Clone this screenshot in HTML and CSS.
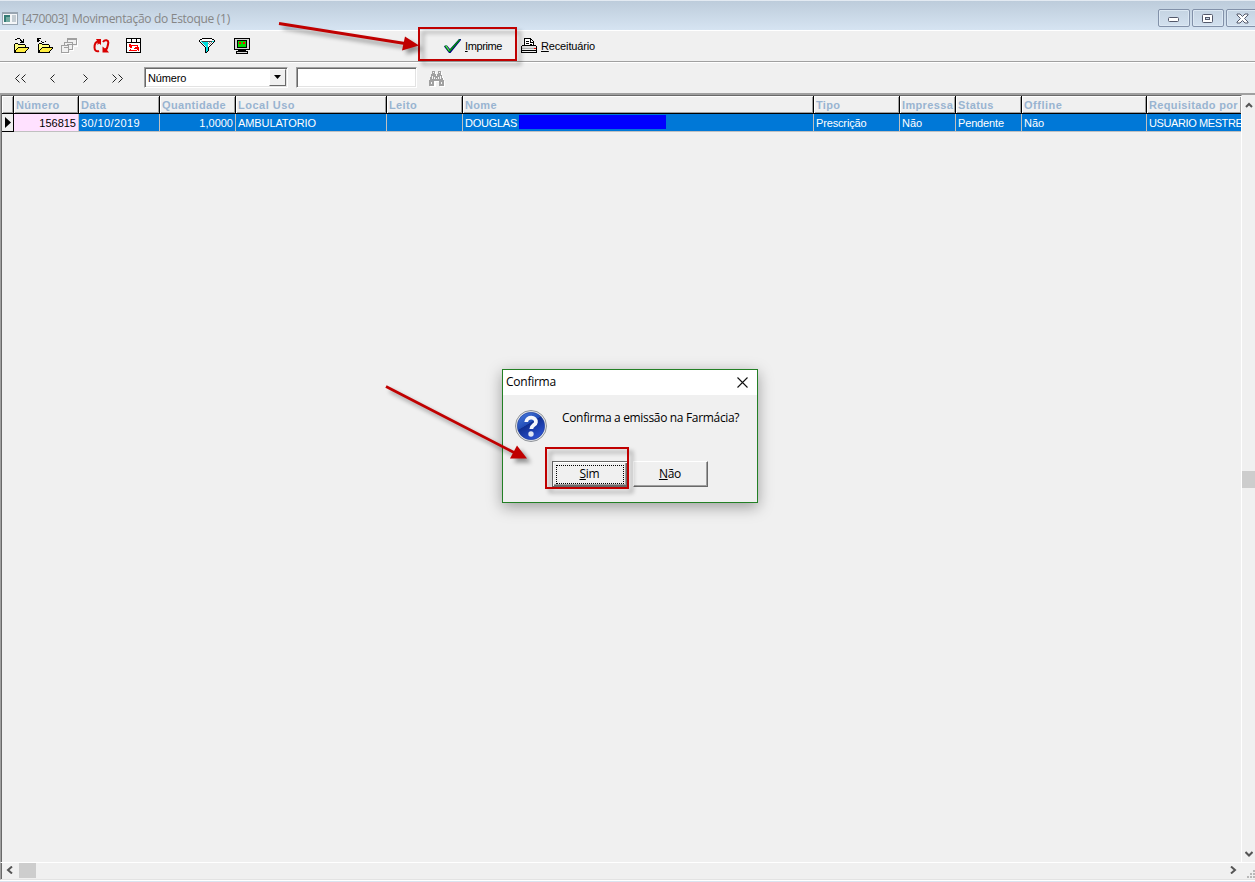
FILE: index.html
```
<!DOCTYPE html>
<html lang="pt-BR">
<head>
  <meta charset="UTF-8">
  <title>[470003] Movimentação do Estoque (1)</title>
  <link rel="stylesheet" href="styles.css">
</head>
<body>
<div class="window">
  <div class="titlebar">
    <svg class="app-icon" width="16" height="14" viewBox="0 0 16 14" shape-rendering="crispEdges">
      <path fill="#98a5b1" d="M0 0h16v13H0z"/><path fill="#f4f6f8" d="M1 2h14v10H1z"/>
      <path fill="#347b75" d="M2 3h6v7H2z"/><path fill="#74aaa1" d="M4 5h4v5H4z"/><path fill="#c3ccd2" d="M10 3h4v7h-4z"/>
    </svg>
    <span class="code">[470003]</span>
    <span class="caption">Movimentação do Estoque (1)</span>
    <div class="win-buttons">
      <div class="win-button"><svg class="min" width="12" height="6"><rect x=".5" y=".5" width="10" height="4" rx="1" fill="#fff" stroke="#53586a"/></svg></div>
      <div class="win-button"><svg width="12" height="9"><rect x=".5" y=".5" width="10" height="8" rx="1" fill="#fff" stroke="#53586a"/><rect x="3.5" y="3.5" width="4" height="2" fill="#c8d6e4" stroke="#53586a"/></svg></div>
      <div class="win-button"><svg width="13" height="11"><path d="M1 1h3l2.500 2.500L9 1h3v1L8.500 5.500 12 9v1H9L6.500 7.500 4 10H1V9l3.500-3.500L1 2z" fill="#fff" stroke="#53586a"/></svg></div>
    </div>
  </div>

  <div class="toolbar">
    <svg class="icon open" width="16" height="16" viewBox="0 0 16 16" shape-rendering="crispEdges">
      <path d="M4 0h3v1H4zM2 1h2v1H2zM7 1h1v1H7zM10 1h1v4H7V4h1V3H7V2h2v1h1z"/>
      <path fill="#ffff80" d="M2 6h3v1h7v3H4l-3 4z"/><path fill="#ffee40" d="M5 10h10l-3 5H1z"/>
      <path d="M2 5h3v1H2zM1 6h1v8H1zM5 6h7v1H5zM12 7h1v2h-1zM5 9h11v1H5zM4 10h1v1H4zM3 11h1v1H3zM2 12h1v2H2zM15 10h1v1h-1zM14 11h1v1h-1zM13 12h1v1h-1zM12 13h1v1h-1zM1 14h12v1H1z"/>
    </svg>
    <svg class="icon close" width="16" height="16" viewBox="0 0 16 16" shape-rendering="crispEdges">
      <path d="M0 0h4v1H2v1h1v1H2v1H0zM4 3h1v1H4zM5 4h2v1H5zM8 3h1v1H8z"/>
      <path fill="#ffff80" d="M2 6h3v1h7v3H4l-3 4z"/><path fill="#ffee40" d="M5 10h10l-3 5H1z"/>
      <path d="M2 5h3v1H2zM1 6h1v8H1zM5 6h7v1H5zM12 7h1v2h-1zM5 9h11v1H5zM4 10h1v1H4zM3 11h1v1H3zM2 12h1v2H2zM15 10h1v1h-1zM14 11h1v1h-1zM13 12h1v1h-1zM12 13h1v1h-1zM1 14h12v1H1z"/>
    </svg>
    <svg class="icon windows" width="17" height="16" viewBox="0 0 17 16" shape-rendering="crispEdges">
      <path fill="#fff" d="M8 2h9v7h-4v4H9v3H1v-1h8V9h4V8h4z"/>
      <g fill="#f1f1f1" stroke="#a0a0a0"><path d="M6.500.5h9v6h-9z"/><path d="M3.500 4.500h8v7h-8z"/><path d="M.5 7.500h7v7h-7z"/></g>
      <path fill="#a0a0a0" d="M7 1h8v1H7zM6 6h5v1H6zM3 9h5v1H3z"/>
    </svg>
    <svg class="icon refresh" width="17" height="14" viewBox="0 0 17 14">
      <path d="M5 2.500C2 3 1.500 6 1.500 8.500c0 3 2 4.500 4.500 3.500M10 3c2-3 5.500-2 5.300.8C15 7.500 14 10 12 12" fill="none" stroke="#d90000" stroke-width="2"/>
      <path fill="#d90000" d="M3 0h5v6L6 4.500 4.500 6V3zM9.500 7.500L12 9.500l3-1.500-1 3 2 2.500H9.500z"/>
    </svg>
    <svg class="icon sheet" width="16" height="16" viewBox="0 0 16 16" shape-rendering="crispEdges">
      <path fill="#fff" stroke="#000" d="M.5.5h14v14H.5z"/><path d="M1 4h13v1H1zM5 1h1v3H5zM10 1h1v3h-1z"/>
      <path fill="#f00" d="M3 6h1v3H3zM4 6h1v4H4zM5 7h1v3H5zM6 7h6v1H6zM11 8h1v1h-1zM12 9h1v4h-1zM11 9h1v3h-1zM9 9h2v2H9zM8 10h1v1H8zM3 12h8v1H3zM4 11h1v1H4z"/>
    </svg>
    <svg class="icon filter" width="17" height="16" viewBox="0 0 17 16" shape-rendering="crispEdges">
      <path fill="#00dede" d="M1 3h14L9 9v5H7V9z"/><path fill="#fff" d="M3 1h10v2H3zM9 4h5l-5 5z"/>
      <path fill="#888" d="M10 4h1v1h-1zM12 4h1v1h-1zM11 5h1v1h-1zM9 5h1v1H9zM10 6h1v1h-1z"/>
      <path d="M3 0h10v1H3zM1 1h2v1H1zM13 1h2v1h-2zM0 2h1v2H0zM15 2h1v2h-1zM1 4h1v1H1zM14 4h1v1h-1zM2 5h1v1H2zM13 5h1v1h-1zM3 6h1v1H3zM12 6h1v1h-1zM4 7h1v1H4zM11 7h1v1h-1zM5 8h1v1H5zM10 8h1v1h-1zM6 9h1v6H6zM9 9h1v4H9zM8 13h1v1H8zM7 14h1v1H7z"/><path fill="#444" d="M3 3h10v1H3z"/>
    </svg>
    <svg class="icon monitor" width="16" height="16" viewBox="0 0 16 16" shape-rendering="crispEdges">
      <path d="M0 0h16v12H0z"/><path fill="#d4d4d4" d="M1 1h14v10H1z"/><path d="M3 2h10v8H3z"/><path fill="#00d800" d="M4 3h8v6H4z"/><path fill="#f00" d="M5 4h2v2H5zM9 4h2v2H9z"/>
      <path d="M4 12h8v1H4zM2 13h12v3H2z"/><path fill="#d4d4d4" d="M3 14h10v1H3z"/>
    </svg>
    <div class="tool print">
      <svg width="17" height="16" viewBox="0 0 17 16">
        <path fill="#000080" d="M0 8.500l1-1h2l3 3.500 9-10h2v1L6.500 15H5z"/><path fill="#00a000" d="M.5 8l2-.5L5.500 12 15 1.500h1.500L5.700 14H5z"/><path fill="#5cd65c" d="M1 7.500h1.500L5.500 12l-.5 1z"/>
      </svg>
      <span><u>I</u>mprime</span>
    </div>
    <div class="tool recipe">
      <svg width="16" height="16" viewBox="0 0 16 16" shape-rendering="crispEdges">
        <path fill="#fff" stroke="#000" d="M3.500 8V.5h6l3 3V8z"/><path d="M9 1h1v3h3v1H9zM5 3h3v1H5zM5 5h3v1H5zM9 6h2v1H9zM1 7h14v1h1v7H0V8h1z"/>
        <path fill="#ddd" d="M1 8h14v2H1z"/><path fill="#aaa" d="M1 10h14v1H1z"/><path fill="#eee" d="M1 11h14v1H1zM1 13h14v1H1z"/><path fill="#f00" d="M13 10h2v1h-2z"/>
      </svg>
      <span><u>R</u>eceituário</span>
    </div>
  </div>

  <div class="searchbar">
    <div class="nav">
      <svg width="128" height="9" viewBox="0 0 128 9" fill="none" stroke="#222"><path d="M13.500.5l-4 4 4 4M19.500.5l-4 4 4 4M48.500.5l-4 4 4 4M77.500.5l4 4-4 4M106.500.5l4 4-4 4M112.500.5l4 4-4 4"/></svg>
    </div>
    <div class="select"><span>Número</span><div class="drop"><svg width="7" height="4"><path d="M0 0h7L3.500 4z"/></svg></div></div>
    <div class="input"></div>
    <svg class="find" width="16" height="16" viewBox="0 0 16 16" shape-rendering="crispEdges">
      <path fill="#fff" d="M4 1h3v3h3V1h3v4h1v2h1v3h1v6h-5v-5H7v5H1V9h1z"/>
      <path fill="#a0a0a0" d="M3 0h3v3h1v2h1V3h1V0h3v4h1v3h1v2h1v6h-5v-5H5v5H0V9h1V6h1V3h1z"/>
      <path fill="#f4f4f4" d="M4 1h1v1H4zM10 1h1v1h-1zM3 5h1v3H3zM5 6h1v2H5zM9 6h1v2H9zM11 5h1v3h-1zM7 7h1v1H7zM2 11h1v2H2zM12 11h1v2h-1z"/>
    </svg>
  </div>

  <div class="content">
    <div class="main">
      <div class="grid header">
        <div></div><div>Número</div><div>Data</div><div>Quantidade</div><div class="wide">Local Uso</div><div>Leito</div><div>Nome</div><div>Tipo</div><div>Impressa</div><div>Status</div><div class="wide">Offline</div><div>Requisitado por</div>
      </div>
      <div class="grid row">
        <div class="marker"><svg width="6" height="11"><path d="M0 0l6 5.500L0 11z"/></svg></div>
        <div class="key num">156815</div><div class="date">30/10/2019</div><div class="num">1,0000</div><div class="place">AMBULATORIO</div><div></div>
        <div class="name">DOUGLAS<span class="mask"></span></div><div class="type">Prescrição</div><div>Não</div><div class="type">Pendente</div><div>Não</div><div class="user">USUARIO MESTRE</div>
      </div>
    </div>
    <div class="vscroll">
      <svg width="8" height="6"><path d="M1 5l3-3 3 3" fill="none" stroke="#555" stroke-width="2"/></svg>
      <div class="vthumb"></div>
      <svg width="8" height="6"><path d="M.5 1l3.500 3.500L7.500 1" fill="none" stroke="#555" stroke-width="2"/></svg>
    </div>
  </div>
  <div class="hscroll">
    <svg width="7" height="8"><path d="M6 .5L2 4l4 3.500" fill="none" stroke="#555" stroke-width="2"/></svg>
    <div class="hthumb"></div>
    <svg class="right" width="7" height="8"><path d="M1 .5L5 4 1 7.500" fill="none" stroke="#555" stroke-width="2"/></svg>
    <svg class="grip" width="8" height="8" shape-rendering="crispEdges"><path fill="#b8b8b8" d="M6 0h2v2H6zM3 3h2v2H3zM6 3h2v2H6zM0 6h2v2H0zM3 6h2v2H3zM6 6h2v2H6z"/></svg>
  </div>
  <div class="bottom"></div>
</div>

<div class="dialog">
  <div class="dialog-title"><span>Confirma</span><svg width="11" height="11"><path d="M.5.5l10 10M10.500.5l-10 10" stroke="#111" stroke-width="1.100"/></svg></div>
  <div class="dialog-body">
    <div class="message">
      <svg width="34" height="34" viewBox="0 0 34 34">
        <defs><linearGradient id="blue" x2=".6" y2="1"><stop stop-color="#4b7de0"/><stop offset=".48" stop-color="#234fb8"/><stop offset=".5" stop-color="#102f91"/><stop offset="1" stop-color="#2b51d0"/></linearGradient></defs>
        <circle cx="17" cy="17" r="15.500" fill="#e8eaed" stroke="#8e9297"/><circle cx="17" cy="17" r="13.700" fill="url(#blue)" stroke="#1c3c98" stroke-width=".6"/>
        <path d="M12.200 13c.3-6 10.300-5.600 9.700.2-.3 2.800-4.600 3.200-4.600 6.800" fill="none" stroke="#f6f8fc" stroke-width="3.800"/><circle cx="17" cy="25" r="2.700" fill="#dfe5f3"/>
      </svg>
      <span>Confirma a emissão na Farmácia?</span>
    </div>
    <div class="buttons">
      <div class="button default"><div class="focus"><span><u>S</u>im</span></div></div>
      <div class="button"><span><u>N</u>ão</span></div>
    </div>
  </div>
</div>

<div class="mark mark-print"></div>
<div class="mark mark-yes"></div>
<svg class="arrows" width="1255" height="882" viewBox="0 0 1255 882">
  <g fill="#c00000" stroke="#c00000">
    <path d="M279 23.500L405 43.500" stroke-width="3"/><path stroke="none" d="M405 36.500L419 45.500 402 50.500z"/>
    <path d="M386 386.500L515 453" stroke-width="2.800"/><path stroke="none" d="M517 445.500L510 458.500H527z"/>
  </g>
</svg>
</body>
</html>
```

FILE: styles.css
```
* {
  box-sizing: border-box;
}
body {
  margin: 0;
  background: #f0f0f0;
  color: #000;
  font: 11px/13px "Liberation Sans", Arial, sans-serif;
  overflow: hidden;
}
svg {
  display: block;
  flex: none;
}
span {
  white-space: nowrap;
}
.window {
  display: flex;
  flex-direction: column;
  height: 882px;
}
/* title */
.titlebar {
  display: flex;
  align-items: center;
  height: 30px;
  padding: 6px 0 0 2px;
  border-top: 1px solid #e3eaf2;
  background: linear-gradient(#bdccdb, #d6e4f2);
  color: #868686;
  font: 12px/16px "Open Sans", "Noto Sans", sans-serif;
}
.code {
  width: 50px;
  margin-left: 4px;
  letter-spacing: -0.4px;
}
.caption {
  letter-spacing: -0.3px;
}
.win-buttons {
  display: flex;
  gap: 2px;
  margin: -1px -3px 0 auto;
}
.win-button {
  display: flex;
  align-items: center;
  justify-content: center;
  width: 32px;
  height: 18px;
  border: 1px solid #8291a9;
  border-radius: 2px;
  box-shadow: inset 0 0 0 1px #dce8f3;
}
.min {
  margin-top: 4px;
}
/* tools */
.toolbar {
  display: flex;
  align-items: center;
  height: 32px;
  padding-left: 13px;
  border-top: 1px solid #fff;
  border-bottom: 1px solid #a0a0a0;
}
.icon.close {
  margin-left: 8px;
}
.icon.windows {
  margin-left: 8px;
}
.icon.refresh {
  margin-left: 15px;
}
.icon.sheet {
  margin-left: 16px;
}
.icon.filter {
  margin-left: 57px;
}
.icon.monitor {
  margin-left: 18px;
}
.tool {
  display: flex;
  align-items: center;
  gap: 4px;
  letter-spacing: -0.4px;
}
.print {
  width: 77px;
  margin-left: 194px;
}
.recipe {
  letter-spacing: -0.15px;
}
.searchbar {
  display: flex;
  align-items: center;
  height: 31px;
  padding: 0 0 2px 6px;
  border-top: 1px solid #fff;
}
.nav {
  margin-top: 2px;
}
.select {
  display: flex;
  justify-content: space-between;
  width: 144px;
  height: 21px;
  margin-left: 10px;
  padding-left: 3px;
  border: 1px solid #a0a0a0;
  border-right-color: #fff;
  border-bottom-color: #fff;
  box-shadow: inset 1px 1px #696969, inset -1px -1px #e3e3e3;
  background: #fff;
  line-height: 20px;
  letter-spacing: -0.15px;
}
.drop {
  display: flex;
  align-items: center;
  justify-content: center;
  width: 17px;
  margin: 1px;
  border: 1px solid #fff;
  border-right-color: #696969;
  border-bottom-color: #696969;
  background: #f0f0f0;
}
.input {
  width: 121px;
  height: 21px;
  margin-left: 8px;
  border: 1px solid #a0a0a0;
  border-right-color: #fff;
  border-bottom-color: #fff;
  box-shadow: inset 1px 1px #696969, inset -1px -1px #e3e3e3;
  background: #fff;
}
.find {
  margin: 3px 0 0 12px;
}
/* data grid */
.content {
  display: flex;
  flex: 1;
  min-height: 0;
  border-top: 2px solid #a0a0a0;
  border-left: 1px solid #a0a0a0;
}
.main {
  flex: 1;
  min-width: 0;
  border-top: 1px solid #696969;
  border-left: 1px solid #696969;
  border-right: 1px solid #fff;
}
.grid {
  display: grid;
  grid-template-columns: 12px 65px 81px 76px 151px 76px 351px 86px 56px 66px 125px 94px;
  height: 18px;
}
.grid > div {
  overflow: hidden;
  padding-left: 2px;
  border-right: 1px solid #c0c0c0;
  border-bottom: 1px solid #c0c0c0;
  background: #0078d7;
  color: #fff;
  line-height: 18px;
  white-space: nowrap;
}
.header > div {
  border-color: #000;
  box-shadow: inset 1px 1px #fff, inset -1px -1px #a0a0a0;
  background: #f0f0f0;
  color: #99b4d1;
  font-weight: bold;
  letter-spacing: 0.35px;
}
.header > .wide {
  letter-spacing: 0.5px;
}
.grid > div:last-child {
  border-right: 0;
}
.grid > .marker {
  padding: 3px 0 0 3px;
  border-color: #000;
  background: #f0f0f0;
}
.grid > .num {
  padding-right: 2px;
  text-align: right;
}
.grid > .key {
  background: #ffe1ff;
  color: #000;
}
.grid > .date {
  letter-spacing: 0.4px;
}
.grid > .place {
  letter-spacing: -0.1px;
}
.grid > .name {
  letter-spacing: -0.25px;
}
.grid > .type {
  letter-spacing: -0.15px;
}
.grid > .user {
  letter-spacing: -0.4px;
}
.mask {
  display: inline-block;
  width: 147px;
  height: 14px;
  margin: 1px 0 0 2px;
  background: #00f;
  vertical-align: top;
}
/* scroll bars */
.vscroll {
  display: flex;
  flex-direction: column;
  align-items: center;
  width: 13px;
  padding: 7px 0 5px;
}
.vthumb {
  width: 13px;
  height: 17px;
  margin: 363px 0 auto;
  background: #cdcdcd;
}
.hscroll {
  display: flex;
  align-items: center;
  height: 18px;
  padding: 0 0 2px 5px;
  border-top: 1px solid #fff;
  border-bottom: 1px solid #e3e3e3;
  border-left: 1px solid #a0a0a0;
  box-shadow: inset 1px 0 #696969;
}
.hthumb {
  width: 17px;
  height: 15px;
  margin-left: 6px;
  background: #cdcdcd;
}
.right {
  margin-left: auto;
}
.grip {
  margin: 7px 0 0 10px;
}
.bottom {
  height: 2px;
  border-top: 1px solid #fff;
  background: #dae4f0;
}
/* confirmation */
.dialog {
  position: absolute;
  left: 502px;
  top: 369px;
  width: 256px;
  height: 134px;
  border: 1px solid #238025;
  background: #f0f0f0;
  box-shadow: 0 4px 14px rgba(0, 0, 0, 0.35);
  font: 12px/16px "Open Sans", "Noto Sans", sans-serif;
  letter-spacing: -0.25px;
}
.dialog-title {
  display: flex;
  align-items: center;
  justify-content: space-between;
  height: 25px;
  padding: 0 9px 1px 3px;
  background: #fff;
}
.message {
  display: flex;
  gap: 14px;
  height: 66px;
  padding: 14px 0 0 11px;
  letter-spacing: -0.33px;
}
.message span {
  margin-top: 1px;
}
.buttons {
  display: flex;
  gap: 5px;
  padding-left: 49px;
}
.button {
  display: flex;
  align-items: center;
  justify-content: center;
  width: 75px;
  height: 26px;
  padding-right: 1px;
  border: 1px solid #fff;
  border-right-color: #696969;
  border-bottom-color: #696969;
  box-shadow: inset -1px -1px #a0a0a0;
}
.default {
  width: 76px;
  border-color: #696969;
  box-shadow: inset 1px 1px #fff, inset -1px -1px #696969, inset -2px -2px #a0a0a0;
}
.focus {
  display: flex;
  align-items: center;
  justify-content: center;
  width: 68px;
  height: 19px;
  border: 1px dotted #000;
}
/* red marks over the screen */
.mark {
  position: absolute;
  border: 2px solid #c00000;
  filter: drop-shadow(4px 4px 2px rgba(0, 0, 0, 0.35));
}
.mark-print {
  left: 418px;
  top: 27px;
  width: 99px;
  height: 34px;
}
.mark-yes {
  left: 545px;
  top: 447px;
  width: 84px;
  height: 42px;
}
.arrows {
  position: absolute;
  left: 0;
  top: 0;
  filter: drop-shadow(4px 4px 2px rgba(0, 0, 0, 0.4));
}
```
